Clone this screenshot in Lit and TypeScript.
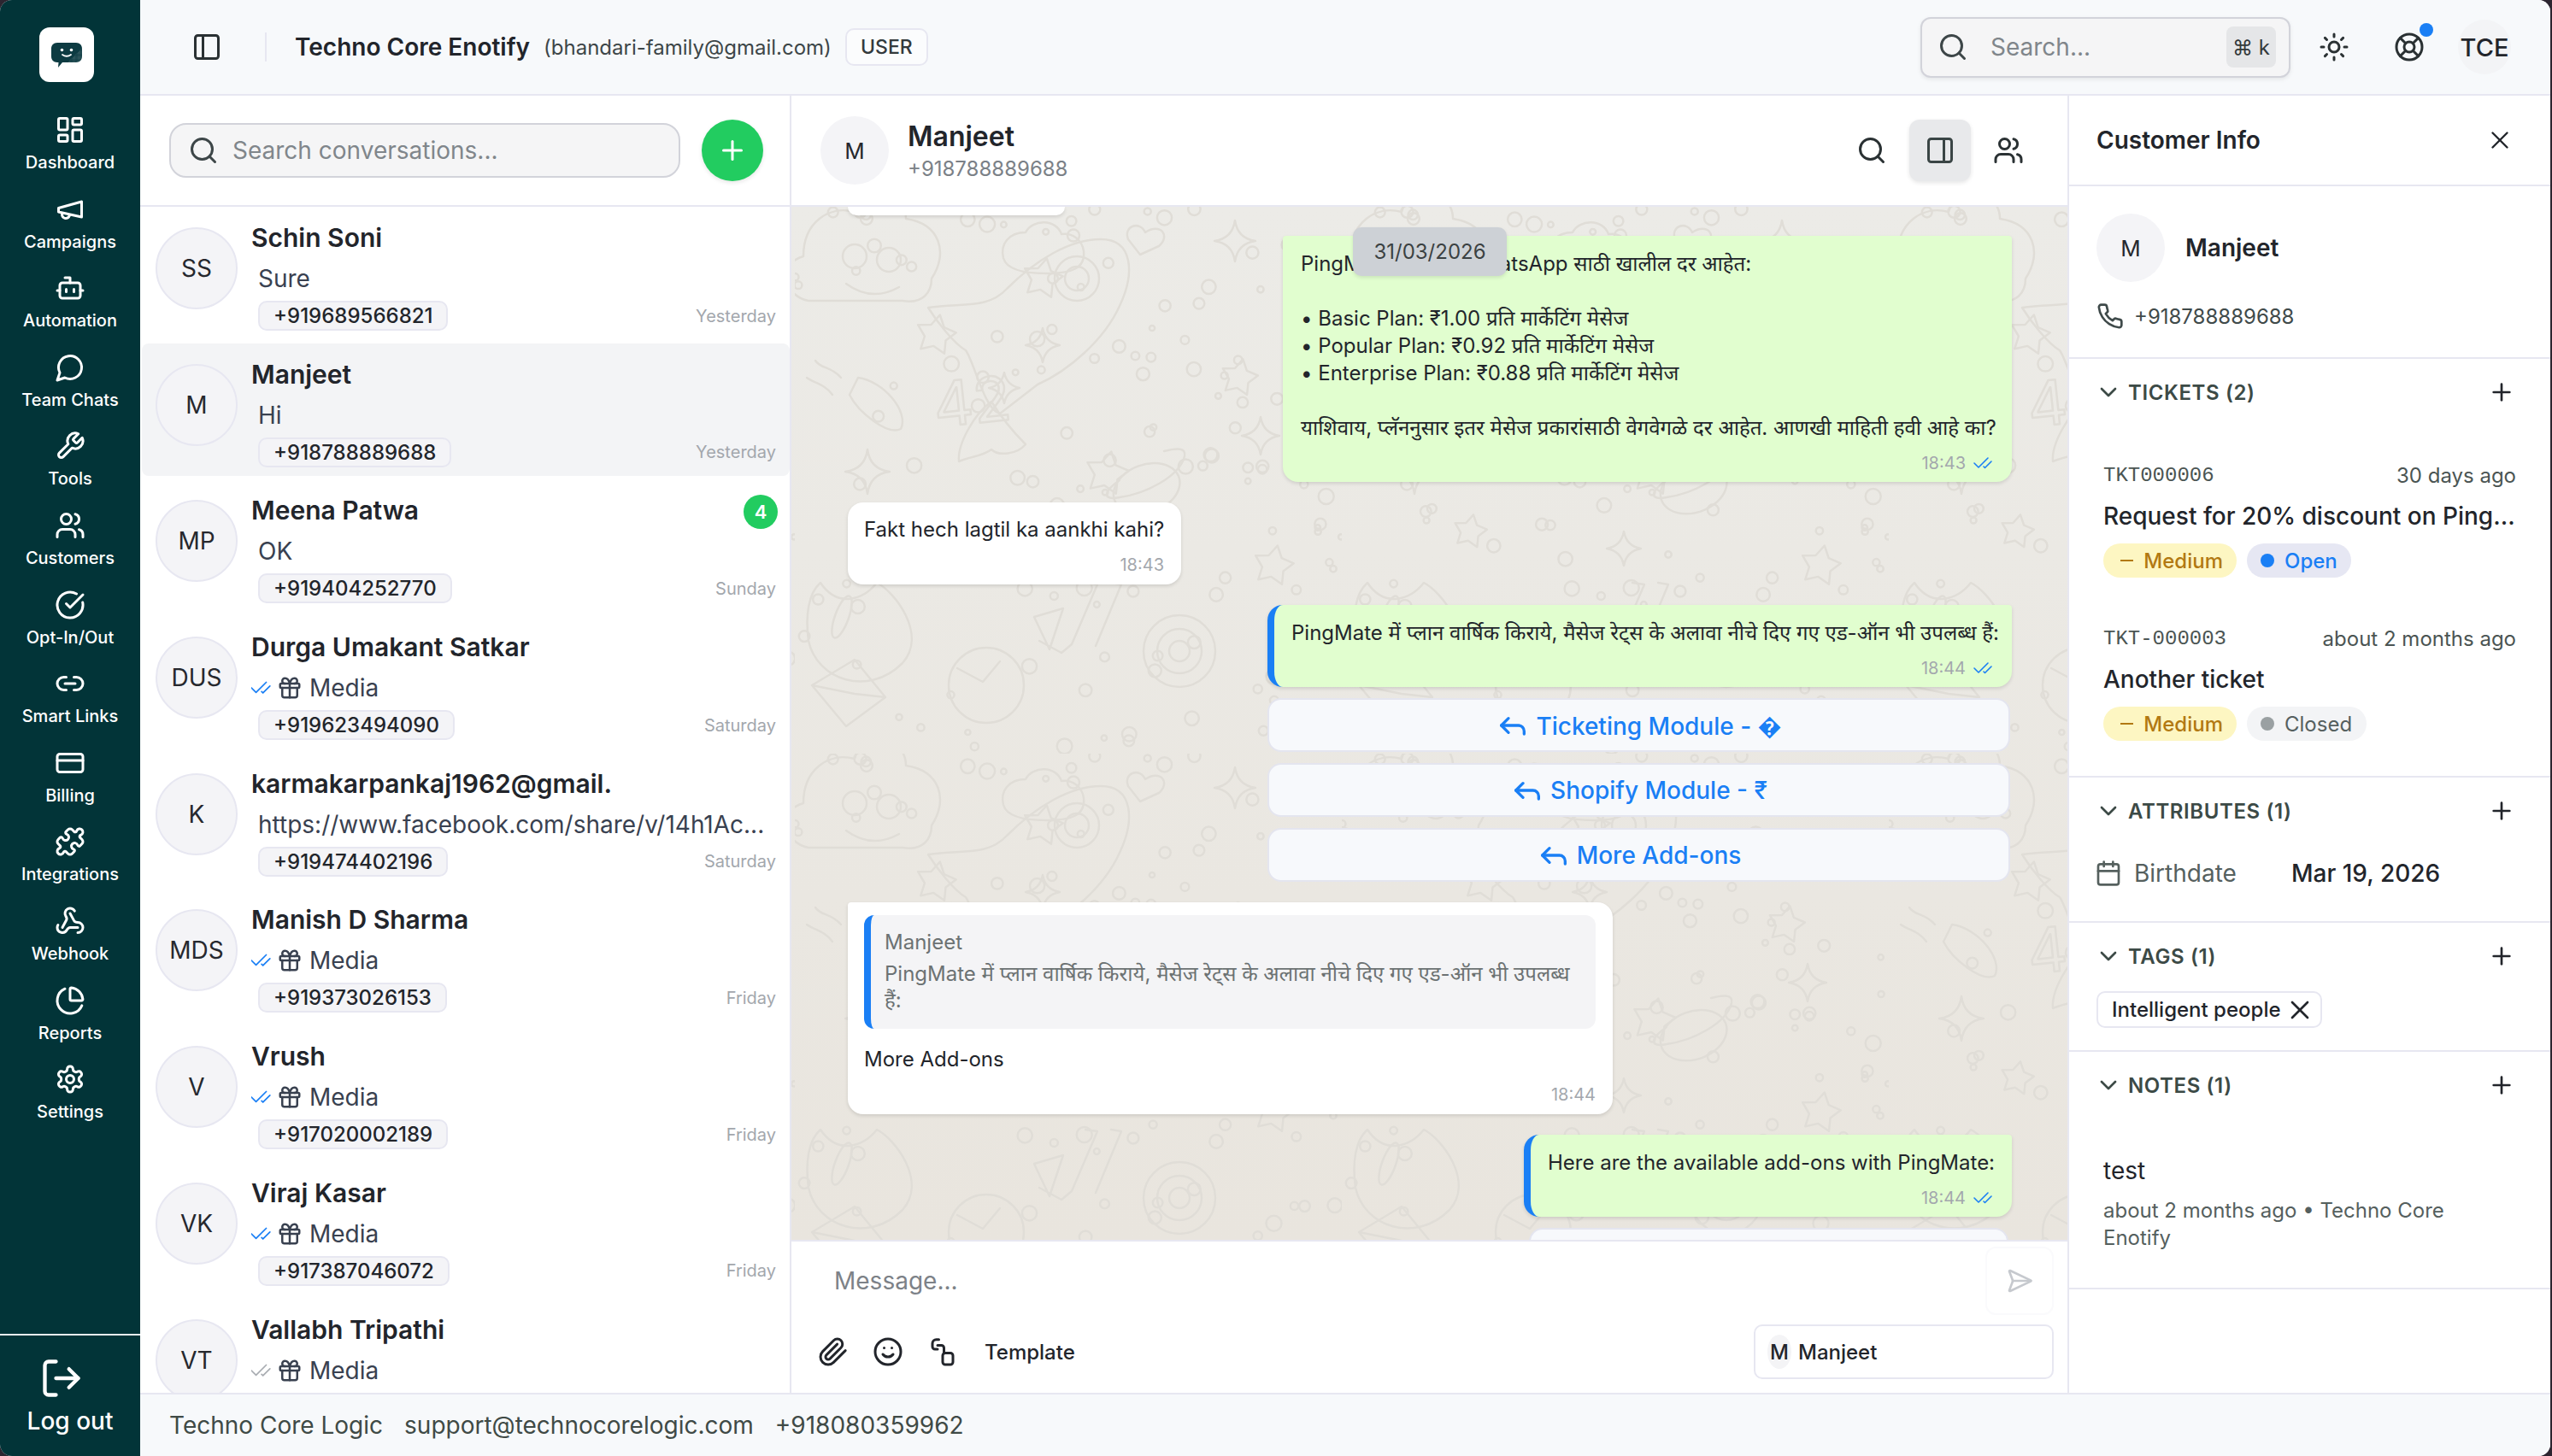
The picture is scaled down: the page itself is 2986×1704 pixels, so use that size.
import { LitElement, html, css, svg } from "lit";
import { customElement } from "lit/decorators.js";
import { unsafeSVG } from "lit/directives/unsafe-svg.js";

const I: Record<string, string> = {
  dashboard: '<rect x="3" y="3" width="7" height="9" rx="1"/><rect x="14" y="3" width="7" height="5" rx="1"/><rect x="14" y="12" width="7" height="9" rx="1"/><rect x="3" y="16" width="7" height="5" rx="1"/>',
  megaphone: '<path d="m3 11 18-5v12L3 14v-3z"/><path d="M11.6 16.8a3 3 0 1 1-5.8-1.6"/>',
  bot: '<path d="M12 8V4H8"/><rect width="16" height="12" x="4" y="8" rx="2"/><path d="M2 14h2"/><path d="M20 14h2"/><path d="M15 13v2"/><path d="M9 13v2"/>',
  chat: '<path d="M7.9 20A9 9 0 1 0 4 16.1L2 22Z"/>',
  wrench: '<path d="M14.7 6.3a1 1 0 0 0 0 1.4l1.6 1.6a1 1 0 0 0 1.4 0l3.77-3.77a6 6 0 0 1-7.94 7.94l-6.91 6.91a2.12 2.12 0 0 1-3-3l6.91-6.91a6 6 0 0 1 7.94-7.94l-3.76 3.76z"/>',
  users: '<path d="M16 21v-2a4 4 0 0 0-4-4H6a4 4 0 0 0-4 4v2"/><circle cx="9" cy="7" r="4"/><path d="M22 21v-2a4 4 0 0 0-3-3.87"/><path d="M16 3.13a4 4 0 0 1 0 7.75"/>',
  check: '<path d="M21.801 10A10 10 0 1 1 17 3.335"/><path d="m9 11 3 3L22 4"/>',
  link: '<path d="M9 17H7A5 5 0 0 1 7 7h2"/><path d="M15 7h2a5 5 0 1 1 0 10h-2"/><line x1="8" x2="16" y1="12" y2="12"/>',
  card: '<rect width="20" height="14" x="2" y="5" rx="2"/><line x1="2" x2="22" y1="10" y2="10"/>',
  puzzle: '<path d="M19.439 7.85c-.049.322.059.648.289.878l1.568 1.568c.47.47.706 1.087.706 1.704s-.235 1.233-.706 1.704l-1.611 1.611a.98.98 0 0 1-.837.276c-.47-.07-.802-.48-.968-.925a2.501 2.501 0 1 0-3.214 3.214c.446.166.855.497.925.968a.979.979 0 0 1-.276.837l-1.61 1.61a2.404 2.404 0 0 1-1.705.707 2.402 2.402 0 0 1-1.704-.706l-1.568-1.568a1.026 1.026 0 0 0-.877-.29c-.493.074-.84.504-1.02.968a2.5 2.5 0 1 1-3.237-3.237c.464-.18.894-.527.967-1.02a1.026 1.026 0 0 0-.289-.877l-1.568-1.568A2.402 2.402 0 0 1 1.998 12c0-.617.236-1.234.706-1.704L4.23 8.77c.24-.24.581-.353.917-.303.515.077.877.528 1.073 1.01a2.5 2.5 0 1 0 3.259-3.259c-.482-.196-.933-.558-1.01-1.073-.05-.336.062-.676.303-.917l1.525-1.525A2.402 2.402 0 0 1 12 1.998c.617 0 1.234.236 1.704.706l1.568 1.568c.23.23.556.338.877.29.493-.074.84-.504 1.02-.968a2.5 2.5 0 1 1 3.237 3.237c-.464.18-.894.527-.967 1.02Z"/>',
  webhook: '<path d="M18 16.98h-5.99c-1.1 0-1.95.94-2.48 1.9A4 4 0 0 1 2 17c.01-.7.2-1.4.57-2"/><path d="m6 17 3.13-5.78c.53-.97.1-2.18-.5-3.1a4 4 0 1 1 6.89-4.06"/><path d="m12 6 3.13 5.73C15.66 12.7 16.9 13 18 13a4 4 0 0 1 0 8"/>',
  pie: '<path d="M21 12c.552 0 1.005-.449.95-.998a10 10 0 0 0-8.953-8.951c-.55-.055-.998.398-.998.95v8a1 1 0 0 0 1 1z"/><path d="M21.21 15.89A10 10 0 1 1 8 2.83"/>',
  settings: '<path d="M12.22 2h-.44a2 2 0 0 0-2 2v.18a2 2 0 0 1-1 1.73l-.43.25a2 2 0 0 1-2 0l-.15-.08a2 2 0 0 0-2.73.73l-.22.38a2 2 0 0 0 .73 2.73l.15.1a2 2 0 0 1 1 1.72v.51a2 2 0 0 1-1 1.74l-.15.09a2 2 0 0 0-.73 2.73l.22.38a2 2 0 0 0 2.73.73l.15-.08a2 2 0 0 1 2 0l.43.25a2 2 0 0 1 1 1.73V20a2 2 0 0 0 2 2h.44a2 2 0 0 0 2-2v-.18a2 2 0 0 1 1-1.73l.43-.25a2 2 0 0 1 2 0l.15.08a2 2 0 0 0 2.73-.73l.22-.39a2 2 0 0 0-.73-2.73l-.15-.08a2 2 0 0 1-1-1.74v-.5a2 2 0 0 1 1-1.74l.15-.09a2 2 0 0 0 .73-2.73l-.22-.38a2 2 0 0 0-2.73-.73l-.15.08a2 2 0 0 1-2 0l-.43-.25a2 2 0 0 1-1-1.73V4a2 2 0 0 0-2-2z"/><circle cx="12" cy="12" r="3"/>',
  logout: '<path d="M9 21H5a2 2 0 0 1-2-2V5a2 2 0 0 1 2-2h4"/><polyline points="16 17 21 12 16 7"/><line x1="21" x2="9" y1="12" y2="12"/>',
  panelL: '<rect width="18" height="18" x="3" y="3" rx="2"/><path d="M9 3v18"/>',
  panelR: '<rect width="18" height="18" x="3" y="3" rx="2"/><path d="M15 3v18"/>',
  search: '<circle cx="11" cy="11" r="8"/><path d="m21 21-4.3-4.3"/>',
  sun: '<circle cx="12" cy="12" r="4"/><path d="M12 2v2"/><path d="M12 20v2"/><path d="m4.93 4.93 1.41 1.41"/><path d="m17.66 17.66 1.41 1.41"/><path d="M2 12h2"/><path d="M20 12h2"/><path d="m6.34 17.66-1.41 1.41"/><path d="m19.07 4.93-1.41 1.41"/>',
  buoy: '<circle cx="12" cy="12" r="10"/><path d="m4.93 4.93 4.24 4.24"/><path d="m14.83 9.17 4.24-4.24"/><path d="m14.83 14.83 4.24 4.24"/><path d="m9.17 14.83-4.24 4.24"/><circle cx="12" cy="12" r="4"/>',
  x: '<path d="M18 6 6 18"/><path d="m6 6 12 12"/>',
  plus: '<path d="M5 12h14"/><path d="M12 5v14"/>',
  chev: '<path d="m6 9 6 6 6-6"/>',
  phone: '<path d="M22 16.92v3a2 2 0 0 1-2.18 2 19.79 19.79 0 0 1-8.63-3.07 19.5 19.5 0 0 1-6-6 19.79 19.79 0 0 1-3.07-8.67A2 2 0 0 1 4.11 2h3a2 2 0 0 1 2 1.72 12.84 12.84 0 0 0 .7 2.81 2 2 0 0 1-.45 2.11L8.09 9.91a16 16 0 0 0 6 6l1.27-1.27a2 2 0 0 1 2.11-.45 12.84 12.84 0 0 0 2.81.7A2 2 0 0 1 22 16.92z"/>',
  calendar: '<path d="M8 2v4"/><path d="M16 2v4"/><rect width="18" height="18" x="3" y="4" rx="2"/><path d="M3 10h18"/>',
  gift: '<rect x="3" y="8" width="18" height="4" rx="1"/><path d="M12 8v13"/><path d="M19 12v7a2 2 0 0 1-2 2H7a2 2 0 0 1-2-2v-7"/><path d="M7.5 8a2.5 2.5 0 0 1 0-5A4.8 8 0 0 1 12 8a4.8 8 0 0 1 4.5-5 2.5 2.5 0 0 1 0 5"/>',
  ticks: '<path d="M18 6 7 17l-5-5"/><path d="m22 10-7.5 7.5L13 16"/>',
  reply: '<polyline points="9 17 4 12 9 7"/><path d="M20 18v-2a4 4 0 0 0-4-4H4"/>',
  clip: '<path d="m21.44 11.05-9.19 9.19a6 6 0 0 1-8.49-8.49l8.57-8.57A4 4 0 1 1 18 8.84l-8.59 8.57a2 2 0 0 1-2.83-2.83l8.49-8.48"/>',
  smile: '<circle cx="12" cy="12" r="10"/><path d="M8 14s1.5 2 4 2 4-2 4-2"/><line x1="9" x2="9.01" y1="9" y2="9"/><line x1="15" x2="15.01" y1="9" y2="9"/>',
  send: '<path d="M3.714 3.048a.498.498 0 0 0-.683.627l2.843 7.627a2 2 0 0 1 0 1.396l-2.842 7.627a.498.498 0 0 0 .682.627l18-8.500a.5.5 0 0 0 0-.904z"/><path d="M6 12h16"/>',
  tpl: '<path d="M9 2.500H7a3 3 0 0 0-3 3V8a2 2 0 0 0 2 2h2"/><path d="M8 7h3a2 2 0 0 1 2 2v4"/><rect x="12" y="13" width="8" height="9" rx="2"/>',
};

const ic = (n: string, size: number, sw = 2, cls = "") =>
  html`<svg class="ic ${cls}" width=${size} height=${size} viewBox="0 0 24 24" fill="none" stroke="currentColor" stroke-width=${sw} stroke-linecap="round" stroke-linejoin="round">${unsafeSVG(I[n])}</svg>`;

const NAV: [string, string][] = [
  ["dashboard", "Dashboard"], ["megaphone", "Campaigns"], ["bot", "Automation"], ["chat", "Team Chats"],
  ["wrench", "Tools"], ["users", "Customers"], ["check", "Opt-In/Out"], ["link", "Smart Links"],
  ["card", "Billing"], ["puzzle", "Integrations"], ["webhook", "Webhook"], ["pie", "Reports"], ["settings", "Settings"],
];

interface Conv { i: string; n: string; m: string; p?: string; t?: string; media?: boolean; gray?: boolean; sel?: boolean; badge?: string }
const CONVS: Conv[] = [
  { i: "SS", n: "Schin Soni", m: "Sure", p: "+919689566821", t: "Yesterday" },
  { i: "M", n: "Manjeet", m: "Hi", p: "+918788889688", t: "Yesterday", sel: true },
  { i: "MP", n: "Meena Patwa", m: "OK", p: "+919404252770", t: "Sunday", badge: "4" },
  { i: "DUS", n: "Durga Umakant Satkar", m: "Media", p: "+919623494090", t: "Saturday", media: true },
  { i: "K", n: "karmakarpankaj1962@gmail.", m: "https://www.facebook.com/share/v/14h1Ac...", p: "+919474402196", t: "Saturday" },
  { i: "MDS", n: "Manish D Sharma", m: "Media", p: "+919373026153", t: "Friday", media: true },
  { i: "V", n: "Vrush", m: "Media", p: "+917020002189", t: "Friday", media: true },
  { i: "VK", n: "Viraj Kasar", m: "Media", p: "+917387046072", t: "Friday", media: true },
  { i: "VT", n: "Vallabh Tripathi", m: "Media", media: true, gray: true },
];

// Wallpaper doodles: one tile, seeded so every run draws the same picture.
let seed = 77;
const rnd = () => ((seed = (seed * 16807) % 2147483647) - 1) / 2147483646;
const star5 = (cx: number, cy: number, r: number) => {
  let p = "";
  for (let k = 0; k < 10; k++) {
    const a = -Math.PI / 2 + (k * Math.PI) / 5 + 0.2;
    const rr = k % 2 ? r * 0.55 : r;
    p += `${(cx + rr * Math.cos(a)).toFixed(1)},${(cy + rr * Math.sin(a)).toFixed(1)} `;
  }
  return svg`<polygon points=${p}/>`;
};
const star4 = (x: number, y: number, r: number) =>
  svg`<path d="M${x} ${y - r}Q${x + 3} ${y - 3} ${x + r} ${y}Q${x + 3} ${y + 3} ${x} ${y + r}Q${x - 3} ${y + 3} ${x - r} ${y}Q${x - 3} ${y - 3} ${x} ${y - r}Z"/>`;
const BIG = svg`
  <g>
    <path d="M46 300c-30-6-36-44-6-52 0-40 30-60 60-52 8-30 60-28 60 8 40 6 50 40 30 70 0 16-10 30-34 26z" transform="translate(-30 -190)"/>
    <circle cx="70" cy="58" r="14"/><circle cx="110" cy="62" r="14"/><path d="M60 90q30 22 62 4"/>
    <path d="M216 148c40-6 70 2 92-22 34-34 74-58 110-58 38 0 40 40 22 78-18 40-60 76-96 92l-44 34c-18-4-30-60-40-74-14-8-34-34-44-50z" transform="translate(-60 -30)"/>
    <circle cx="330" cy="84" r="26"/><circle cx="330" cy="84" r="14"/>
    <path d="M230 228c-20 14-40 50-38 70 14-6 28-6 38-14 8 8 30 6 40-6-14-14-30-34-40-50z"/>
    <path d="M420 300a40 28 -20 1 0 1 0z"/><path d="M380 320c-20 14-20 24 0 20 30-4 70-24 76-48 2-10-8-10-24-6"/>
    <path d="M280 60c-20 0-30 14-26 30 4 14 24 18 50 18 30 0 46-6 44-26-2-14-14-22-26-20-6-18-34-18-42-2z" transform="translate(-10 -30)"/>
    <path d="M400 40c-6-14-26-8-20 8l14 18 22-10c14-12 2-28-16-16z" transform="translate(10 -10)"/>
    <path d="M30 440c20 30 50 20 66 0 20 10 60 60 30 94-40 40-100 20-110-26-4-30 0-56 14-68z"/><ellipse cx="55" cy="480" rx="8" ry="26" transform="rotate(20 55 480)"/>
    <path d="M280 480l34-10-16 48zM340 440l14 2-30 70-12 10-26-14M370 440l12 2-30 72"/>
    <circle cx="450" cy="520" r="42"/><circle cx="450" cy="520" r="26"/><circle cx="450" cy="520" r="12"/>
    <path d="M20 560l50-30 36 44-46 34zM20 560l50 10 36 4"/>
    <path d="M180 560a44 44 0 1 0 88 0a44 44 0 1 0-88 0zM190 540l30 16 20-24"/>
    <path d="M40 230c-12-14-24-10-30-20M30 250c-8-12-22-14-30-20M60 230c30 4 60 40 50 60-16 8-50-20-60-40z" transform="translate(14 -30)"/>
    <text x="165" y="258" font-family="Inter,sans-serif" font-size="72" fill="none" stroke-width="2.5" transform="rotate(-6 165 258)">42</text>
  </g>`;
const star5s = [[165, 150, 24], [290, 84, 24], [365, 312, 26], [520, 200, 22], [560, 420, 24], [150, 380, 20]];
const star4s = [[290, 162, 20], [515, 40, 24], [545, 268, 22], [85, 310, 26], [245, 212, 18], [600, 120, 20], [330, 400, 20]];
const DOTS = Array.from({ length: 130 }, () => ({ x: rnd() * 640, y: rnd() * 640, r: 3 + rnd() * 6 }));
const TILE = svg`${BIG}${star5s.map(([a, b, c]) => star5(a, b, c))}${star4s.map(([a, b, c]) => star4(a, b, c))}${DOTS.map((d) => svg`<circle cx=${d.x.toFixed(1)} cy=${d.y.toFixed(1)} r=${d.r.toFixed(1)}/>`)}`;

@customElement("app-root")
export class AppRoot extends LitElement {
  static styles = css`
    :host { display: block; width: 2986px; height: 1704px; overflow: hidden; background: #2c2530; font-family: Inter, "Noto Sans", sans-serif; color: #22252b; }
    .ic { display: block; flex: none; }
    .app { display: grid; grid-template-columns: 164px 1fr; width: 2984px; height: 1704px; border-radius: 14px; overflow: hidden; background: #fff; }

    .side { background: #023438; color: #fff; display: flex; flex-direction: column; align-items: center; }
    .logo { width: 64px; height: 64px; margin-top: 32px; border-radius: 12px; background: #fff; flex: none; align-self: flex-start; margin-left: 46px; }
    .nav { margin-top: 38px; width: 100%; flex: 1; }
    .nav-item { height: 92.6px; display: flex; flex-direction: column; align-items: center; font-size: 20px; font-weight: 500; line-height: 28px; gap: 6px; white-space: nowrap; }
    .logout { width: 100%; height: 141px; border-top: 2px solid #e8ecee; display: flex; flex-direction: column; align-items: center; }
    .logout .ic { margin: 24px 20px 0 0; }
    .logout span { font-size: 28px; font-weight: 500; line-height: 36px; margin-top: 6px; }

    .main { display: flex; flex-direction: column; min-width: 0; height: 1704px; }
    .top { height: 112px; flex: none; box-sizing: border-box; border-bottom: 2px solid #e7e7f1; background: #f7f9fb; display: flex; align-items: center; padding-left: 60px; color: #2a3133; }
    .vline { width: 2px; height: 34px; background: #e7e7f1; margin: 0 33px 0 50px; }
    .title { font-size: 28px; font-weight: 600; color: #22252b; white-space: nowrap; }
    .mail { font-size: 24px; color: #3d4648; margin-left: 16px; white-space: nowrap; }
    .role { margin-left: 16px; height: 44px; box-sizing: border-box; width: 97px; border: 2px solid #e7e7f1; border-radius: 10px; background: #fbfcfd; font-size: 23px; font-weight: 500; display: flex; align-items: center; justify-content: center; color: #333a3c; }
    .grow { flex: 1; }
    .gsearch { width: 433px; height: 71px; box-sizing: border-box; border: 2px solid #d2d3da; border-radius: 12px; background: #f5f5f6; box-shadow: 0 2px 5px rgba(0,0,0,.08); display: flex; align-items: center; padding: 0 15px 0 18px; color: #3d4648; }
    .gsearch .ph { margin-left: 26px; flex: 1; font-size: 28px; color: #80868b; }
    .kbd { width: 58px; height: 48px; border-radius: 8px; background: #e5e6e8; font-size: 24px; display: flex; align-items: center; justify-content: center; color: #33393b; }
    .sun { margin-left: 33px; }
    .buoy { margin-left: 52px; position: relative; }
    .dot { position: absolute; width: 16px; height: 16px; border-radius: 50%; background: #1a7ff5; right: -10px; top: -10px; }
    .tce { margin: 0 46px 0 39px; width: 62px; height: 64px; border-radius: 50%; background: #f3f4f6; font-size: 29px; font-weight: 500; color: #22252b; display: flex; align-items: center; justify-content: center; }

    .body { flex: 1; min-height: 0; display: grid; grid-template-columns: 762px 1493px 1fr; }
    .convs { border-right: 2px solid #e7e7f1; overflow: hidden; min-width: 0; }
    .convs-head { height: 130px; box-sizing: border-box; border-bottom: 2px solid #e7e7f1; display: flex; align-items: center; padding: 0 0 0 34px; gap: 25px; }
    .csearch { width: 598px; height: 64px; box-sizing: border-box; border: 2px solid #d2d3da; border-radius: 20px; background: #f5f5f6; display: flex; align-items: center; padding-left: 20px; gap: 16px; color: #3d4648; }
    .csearch span { font-size: 28px; color: #80868b; }
    .new { width: 72px; height: 72px; border-radius: 50%; background: #22cc60; color: #fff; display: flex; align-items: center; justify-content: center; box-shadow: 0 2px 5px rgba(0,0,0,.1); }
    .row { height: 155.7px; margin: 0 0 4px 2px; width: 758px; box-sizing: border-box; border-radius: 8px; padding: 16px 16px 0; display: flex; gap: 16px; }
    .row.sel { background: #f3f4f6; }
    .av { flex: none; box-sizing: border-box; border-radius: 50%; background: #f4f4f7; display: flex; align-items: center; justify-content: center; color: #26282e; }
    .row .av { width: 96px; height: 96px; border: 2px solid #e7e7f1; font-size: 28px; margin-top: 8px; }
    .cbody { flex: 1; min-width: 0; }
    .nline { height: 40px; display: flex; justify-content: space-between; align-items: flex-start; }
    .name { font-size: 30px; font-weight: 600; line-height: 41px; color: #22252b; white-space: nowrap; }
    .badge { width: 40px; height: 40px; margin: 2px -2px 0 0; border-radius: 50%; background: #22cc60; color: #fff; font-size: 22px; font-weight: 600; display: flex; align-items: center; justify-content: center; }
    .msg { margin-top: 8px; height: 40px; font-size: 28px; line-height: 40px; color: #394150; display: flex; align-items: center; padding-left: 8px; white-space: nowrap; overflow: hidden; }
    .msg.m { padding-left: 0; }
    .tick { color: #1a7ff5; margin: 0 6px 0 -2px; }
    .tick.g { color: #a9adb2; }
    .gift { margin-right: 8px; color: #394150; }
    .pline { margin-top: 6px; display: flex; justify-content: space-between; align-items: center; padding-left: 8px; }
    .pill { height: 35px; box-sizing: border-box; border: 2px solid #e7e7f1; border-radius: 10px; background: #f4f4f7; font-size: 24px; font-weight: 500; padding: 0 16px; display: flex; align-items: center; color: #22252b; }
    .time { font-size: 20px; color: #a3a7ad; }

    .chat { display: flex; flex-direction: column; min-width: 0; overflow: hidden; }
    .chead { height: 130px; flex: none; box-sizing: border-box; border-bottom: 2px solid #e7e7f1; display: flex; align-items: center; padding: 0 0 0 34px; position: relative; z-index: 2; background: #fff; }
    .chead .av { width: 80px; height: 80px; font-size: 26px; }
    .cn { margin-left: 22px; }
    .cn b { display: block; font-size: 32px; font-weight: 600; line-height: 44px; }
    .cn span { display: block; font-size: 24px; color: #7b8187; line-height: 32px; }
    .cs { margin-right: 26px; color: #2a3133; }
    .pbtn { width: 72px; height: 72px; border-radius: 12px; background: #e8e9eb; box-shadow: 0 2px 5px rgba(0,0,0,.1); display: flex; align-items: center; justify-content: center; color: #3a4545; margin-right: 26px; }
    .ul { margin-right: 51px; color: #2a3133; }

    .wall { flex: 1; min-height: 0; background: linear-gradient(#ecebe7, #e9e5de); position: relative; overflow: hidden; }
    .doodle { position: absolute; left: 0; top: 0; width: 100%; height: 100%; }
    .date { position: absolute; left: 657px; top: 24px; width: 180px; height: 57px; z-index: 1; border-radius: 10px; background: #cdd1d6; box-shadow: 0 2px 4px rgba(0,0,0,.1); font-size: 24px; color: #3b4142; display: flex; align-items: center; justify-content: center; }
    .msgs { position: relative; display: flex; flex-direction: column; align-items: flex-start; padding: 0 65px 0 66px; height: 100%; box-sizing: border-box; }
    .b { box-sizing: border-box; box-shadow: 0 2px 4px rgba(0,0,0,.12); font-size: 24px; line-height: 32px; color: #22252b; border-radius: 18px; margin-top: 24px; flex: none; white-space: nowrap; }
    .b.in { background: #fff; padding: 16px 20px 10px 19px; }
    .b.mine { background: #e1fecf; padding: 17px 22px 10px 21px; align-self: flex-end; border-top-right-radius: 4px; }
    .b.bl { border-left: 8px solid #1a7ff5; padding-left: 20px; border-top-left-radius: 18px; }
    .b.in.stub { width: 254px; height: 10px; margin-top: 0; padding: 0; border-radius: 0 0 16px 16px; }
    .w1 { width: 853px; height: 288px; border-top-left-radius: 4px !important; }
    .w2 { width: 390px; height: 96px; }
    .w3 { width: 871px; height: 96px; }
    .w4 { width: 895px; height: 248px; border-top-left-radius: 4px !important; padding-top: 15px !important; }
    .w5 { width: 571px; height: 96px; }
    .meta { display: flex; justify-content: flex-end; align-items: center; gap: 8px; height: 24px; margin-top: 13px; font-size: 20px; line-height: 24px; color: #a3a7ad; }
    .meta .ic { color: #1a7ff5; }
    .q { border-left: 8px solid #1a7ff5; border-radius: 12px; background: #f4f4f6; height: 133px; box-sizing: border-box; padding: 16px 16px 0; font-size: 24px; line-height: 31px; color: #6c7273; margin-bottom: 20px; }
    .q div:first-child { margin-bottom: 6px; }
    .btn { width: 869px; height: 63px; flex: none; box-sizing: border-box; align-self: flex-end; margin: 13px 2px 0 0; border: 2px solid #e4e5ef; border-radius: 16px; background: #f7f9fc; color: #1a7ff5; font-size: 28px; font-weight: 500; display: flex; align-items: center; justify-content: center; gap: 7px; }
    .btn.x { width: 561px; margin-right: 4px; }

    .comp { height: 179px; flex: none; box-sizing: border-box; border-top: 2px solid #e7e7f1; background: #fff; position: relative; z-index: 2; display: flex; flex-direction: column; }
    .cr1 { height: 92px; display: flex; align-items: center; padding: 0 16px 0 50px; justify-content: space-between; font-size: 28px; color: #7d8288; }
    .sendb { width: 80px; height: 80px; border-radius: 12px; border: 2px solid #fafafc; box-sizing: border-box; display: flex; align-items: center; justify-content: center; color: #c6c9ce; }
    .cr2 { display: flex; align-items: center; padding: 0 16px 0 31px; height: 64px; margin-top: 5px; color: #22252b; }
    .cr2 .ic { margin-right: 28px; }
    .cr2 .tpl { margin-right: 0; }
    .cr2 .t { font-size: 24px; font-weight: 500; margin-left: 31px; }
    .sel-box { width: 351px; height: 64px; box-sizing: border-box; border: 2px solid #e7e7f1; border-radius: 10px; display: flex; align-items: center; padding-left: 14px; font-size: 24px; font-weight: 500; gap: 8px; }
    .sel-box i { font-style: normal; width: 28px; height: 40px; border-radius: 50%; background: #f4f4f6; display: flex; align-items: center; justify-content: center; font-size: 24px; }

    .info { border-left: 2px solid #e7e7f1; min-width: 0; overflow: hidden; }
    .ihead { height: 106px; box-sizing: border-box; border-bottom: 2px solid #e7e7f1; padding: 0 42px 0 32px; display: flex; align-items: center; justify-content: space-between; font-size: 28px; font-weight: 600; }
    .contact { height: 202px; box-sizing: border-box; border-bottom: 2px solid #e7e7f1; padding: 32px 32px 0; }
    .cc { display: flex; align-items: center; gap: 24px; font-size: 28px; font-weight: 600; }
    .cc .av { width: 80px; height: 80px; font-size: 26px; font-weight: 400; border: none; }
    .cp { display: flex; align-items: center; gap: 12px; margin-top: 24px; font-size: 24px; color: #3f4a4a; }
    .sec { box-sizing: border-box; border-bottom: 2px solid #e7e7f1; padding: 0 32px 0 32px; }
    .sh { height: 78px; display: flex; align-items: center; color: #3c4a46; font-size: 24px; font-weight: 600; letter-spacing: .6px; margin-left: 2px; }
    .sh .chev { margin: 0 7px 0 -4px; }
    .sh .add { margin-left: auto; margin-right: 9px; color: #22252b; }
    .tk { padding: 0 8px; }
    .tk1 { display: flex; justify-content: space-between; height: 32px; align-items: center; font-size: 24px; color: #4b5553; }
    .tk1 b { font-family: "Liberation Mono", monospace; font-weight: 400; }
    .tk2 { margin-top: 12px; height: 40px; font-size: 28px; font-weight: 500; line-height: 40px; white-space: nowrap; }
    .tk3 { display: flex; gap: 12px; margin-top: 12px; }
    .bdg { height: 40px; border-radius: 20px; box-sizing: border-box; display: flex; align-items: center; font-size: 24px; font-weight: 500; gap: 12px; padding: 0 16px; }
    .med { background: #fdf6c2; color: #b27912; width: 156px; padding-left: 20px; }
    .med i { width: 16px; height: 2px; background: #b27912; }
    .opn { background: #e6e7f3; color: #1a7ff5; width: 122px; }
    .cls { background: #f3f4f6; color: #56605f; width: 140px; font-weight: 400; }
    .bdg em { width: 16px; height: 16px; border-radius: 50%; background: currentColor; }
    .cls em { background: #9aa0a2; }
    .attr { display: flex; align-items: center; margin: 14px 0 0 -2px; height: 40px; font-size: 28px; color: #55605e; }
    .attr .ic { margin-right: 14px; }
    .attr span { width: 184px; }
    .attr b { font-weight: 500; color: #22252b; }
    .tag { margin-top: 2px; width: 264px; height: 43px; box-sizing: border-box; border: 2px solid #e7e7f1; border-radius: 10px; display: flex; align-items: center; padding-left: 16px; gap: 4px; font-size: 24px; font-weight: 500; }
    .note { margin: 41px 8px 0; font-size: 28px; line-height: 40px; }
    .nm { margin: 11px 8px 0; font-size: 24px; line-height: 32px; color: #55605e; }

    .foot { height: 74px; flex: none; box-sizing: border-box; border-top: 2px solid #e7e7f1; background: #f7f9fb; padding-left: 34px; display: flex; align-items: center; gap: 25px; font-size: 28px; color: #3f4a46; }
  `;

  private logo() {
    const dots = [];
    for (let x = 0; x < 16; x++) for (let y = 0; y < 16; y++)
      if (x + y > 15) dots.push(svg`<rect x=${33 + x * 1.2} y=${22 + y * 1.2} width=".6" height=".6" fill="#fff" opacity=".35"/>`);
    return html`<svg class="logo" viewBox="0 0 64 64">
      <path d="M21 18h22c4.500 0 7 3 7 7v9c0 4-2.500 7-7 7H27l-5 6 .5-6H21c-4.500 0-7-3-7-7v-9c0-4 2.500-7 7-7Z" fill="#0d3b42"/>
      ${dots}
      <circle cx="26.500" cy="26.500" r="1.800" fill="#fff"/><circle cx="37.500" cy="26.500" r="1.800" fill="#fff"/>
      <path d="M27 32q5 3.500 10 0" fill="none" stroke="#fff" stroke-width="1.800" stroke-linecap="round"/>
    </svg>`;
  }

  private meta(t: string, ticks = true) {
    return html`<div class="meta">${t}${ticks ? ic("ticks", 24, 1.6) : ""}</div>`;
  }

  private conv(c: Conv) {
    return html`<div class="row ${c.sel ? "sel" : ""}">
      <div class="av">${c.i}</div>
      <div class="cbody">
        <div class="nline"><div class="name">${c.n}</div>${c.badge ? html`<div class="badge">${c.badge}</div>` : ""}</div>
        <div class="msg ${c.media ? "m" : ""}">
          ${c.media ? html`${ic("ticks", 26, 1.6, c.gray ? "tick g" : "tick")}${ic("gift", 30, 2, "gift")}` : ""}
          <span>${c.m}</span>
        </div>
        ${c.p ? html`<div class="pline"><div class="pill">${c.p}</div><div class="time">${c.t}</div></div>` : ""}
      </div>
    </div>`;
  }

  render() {
    return html`<div class="app">
      <aside class="side">
        ${this.logo()}
        <nav class="nav">
          ${NAV.map(([i, l]) => html`<div class="nav-item">${ic(i, 36, 2)}<span>${l}</span></div>`)}
        </nav>
        <div class="logout">${ic("logout", 52, 2)}<span>Log out</span></div>
      </aside>
      <div class="main">
        <header class="top">
          ${ic("panelL", 36, 2)}
          <div class="vline"></div>
          <div class="title">Techno Core Enotify</div>
          <div class="mail">(bhandari-family@gmail.com)</div>
          <div class="role">USER</div>
          <div class="grow"></div>
          <div class="gsearch">${ic("search", 36, 2)}<span class="ph">Search...</span><span class="kbd">⌘ k</span></div>
          <div class="sun">${ic("sun", 36, 2)}</div>
          <div class="buoy">${ic("buoy", 36, 2)}<span class="dot"></span></div>
          <div class="tce">TCE</div>
        </header>
        <div class="body">
          <section class="convs">
            <div class="convs-head">
              <div class="csearch">${ic("search", 36, 2)}<span>Search conversations...</span></div>
              <div class="new">${ic("plus", 36, 2)}</div>
            </div>
            ${CONVS.map((c) => this.conv(c))}
          </section>
          <section class="chat">
            <div class="chead">
              <div class="av">M</div>
              <div class="cn"><b>Manjeet</b><span>+918788889688</span></div>
              <div class="grow"></div>
              <div class="cs">${ic("search", 36, 2)}</div>
              <div class="pbtn">${ic("panelR", 36, 2)}</div>
              <div class="ul">${ic("users", 36, 2)}</div>
            </div>
            <div class="wall">
              <svg class="doodle" aria-hidden="true">
                <defs><pattern id="dd" x="4" y="0" width="640" height="640" patternUnits="userSpaceOnUse">
                  <g fill="none" stroke="#e0ddd7" stroke-width="2.500" stroke-linejoin="round" stroke-linecap="round">${TILE}</g>
                </pattern></defs>
                <rect width="100%" height="100%" fill="url(#dd)"/>
              </svg>
              <div class="date">31/03/2026</div>
              <div class="msgs">
                <div class="b in stub"></div>
                <div class="b mine w1">PingMate प्लॅनमध्ये WhatsApp साठी खालील दर आहेत:<br><br>• Basic Plan: ₹1.00 प्रति मार्केटिंग मेसेज<br>• Popular Plan: ₹0.92 प्रति मार्केटिंग मेसेज<br>• Enterprise Plan: ₹0.88 प्रति मार्केटिंग मेसेज<br><br>याशिवाय, प्लॅननुसार इतर मेसेज प्रकारांसाठी वेगवेगळे दर आहेत. आणखी माहिती हवी आहे का?${this.meta("18:43")}</div>
                <div class="b in w2">Fakt hech lagtil ka aankhi kahi?${this.meta("18:43", false)}</div>
                <div class="b mine bl w3">PingMate में प्लान वार्षिक किराये, मैसेज रेट्स के अलावा नीचे दिए गए एड-ऑन भी उपलब्ध हैं:${this.meta("18:44")}</div>
                <div class="btn">${ic("reply", 40, 2)}Ticketing Module - �</div>
                <div class="btn">${ic("reply", 40, 2)}Shopify Module - ₹</div>
                <div class="btn">${ic("reply", 40, 2)}More Add-ons</div>
                <div class="b in w4">
                  <div class="q"><div>Manjeet</div>PingMate में प्लान वार्षिक किराये, मैसेज रेट्स के अलावा नीचे दिए गए एड-ऑन भी उपलब्ध<br>हैं:</div>
                  More Add-ons${this.meta("18:44", false)}
                </div>
                <div class="b mine bl w5">Here are the available add-ons with PingMate:${this.meta("18:44")}</div>
                <div class="btn x"></div>
              </div>
            </div>
            <div class="comp">
              <div class="cr1"><span>Message...</span><div class="sendb">${ic("send", 32, 2)}</div></div>
              <div class="cr2">
                ${ic("clip", 36, 2)}${ic("smile", 36, 2)}${ic("tpl", 36, 2, "tpl")}
                <span class="t">Template</span>
                <div class="grow"></div>
                <div class="sel-box"><i>M</i>Manjeet</div>
              </div>
            </div>
          </section>
          <section class="info">
            <div class="ihead">Customer Info ${ic("x", 34, 1.7)}</div>
            <div class="contact">
              <div class="cc"><div class="av">M</div>Manjeet</div>
              <div class="cp">${ic("phone", 32, 2)}+918788889688</div>
            </div>
            <div class="sec" style="height:490px">
              <div class="sh">${ic("chev", 32, 2, "chev")}TICKETS (2)${ic("plus", 32, 2, "add")}</div>
              <div class="tk" style="margin-top:42px">
                <div class="tk1"><b>TKT000006</b><span>30 days ago</span></div>
                <div class="tk2">Request for 20% discount on Ping...</div>
                <div class="tk3"><div class="bdg med"><i></i>Medium</div><div class="bdg opn"><em></em>Open</div></div>
              </div>
              <div class="tk" style="margin-top:55px">
                <div class="tk1"><b>TKT-000003</b><span>about 2 months ago</span></div>
                <div class="tk2">Another ticket</div>
                <div class="tk3"><div class="bdg med"><i></i>Medium</div><div class="bdg cls"><em></em>Closed</div></div>
              </div>
            </div>
            <div class="sec" style="height:170px">
              <div class="sh">${ic("chev", 32, 2, "chev")}ATTRIBUTES (1)${ic("plus", 32, 2, "add")}</div>
              <div class="attr">${ic("calendar", 32, 2)}<span>Birthdate</span><b>Mar 19, 2026</b></div>
            </div>
            <div class="sec" style="height:151px">
              <div class="sh">${ic("chev", 32, 2, "chev")}TAGS (1)${ic("plus", 32, 2, "add")}</div>
              <div class="tag">Intelligent people ${ic("x", 36, 1.8)}</div>
            </div>
            <div class="sec" style="height:278px">
              <div class="sh">${ic("chev", 32, 2, "chev")}NOTES (1)${ic("plus", 32, 2, "add")}</div>
              <div class="note">test</div>
              <div class="nm">about 2 months ago • Techno Core Enotify</div>
            </div>
          </section>
        </div>
        <footer class="foot"><span>Techno Core Logic</span><span>support@technocorelogic.com</span><span>+918080359962</span></footer>
      </div>
    </div>`;
  }
}
